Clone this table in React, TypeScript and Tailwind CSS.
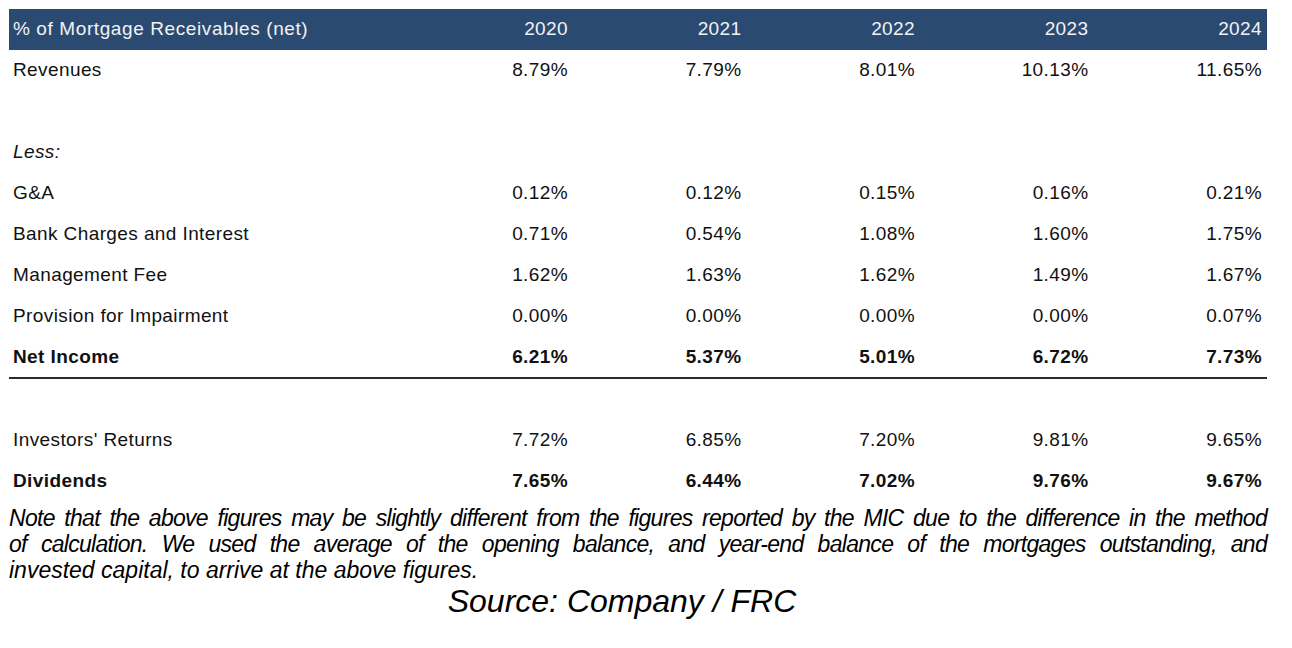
const years = ['2020', '2021', '2022', '2023', '2024']

type Row = {
  label: string
  values?: string[]
  bold?: boolean
  italic?: boolean
  rule?: boolean
}

const rows: Row[] = [
  { label: 'Revenues', values: ['8.79%', '7.79%', '8.01%', '10.13%', '11.65%'] },
  { label: '' },
  { label: 'Less:', italic: true },
  { label: 'G&A', values: ['0.12%', '0.12%', '0.15%', '0.16%', '0.21%'] },
  { label: 'Bank Charges and Interest', values: ['0.71%', '0.54%', '1.08%', '1.60%', '1.75%'] },
  { label: 'Management Fee', values: ['1.62%', '1.63%', '1.62%', '1.49%', '1.67%'] },
  { label: 'Provision for Impairment', values: ['0.00%', '0.00%', '0.00%', '0.00%', '0.07%'] },
  { label: 'Net Income', values: ['6.21%', '5.37%', '5.01%', '6.72%', '7.73%'], bold: true, rule: true },
  { label: '' },
  { label: "Investors' Returns", values: ['7.72%', '6.85%', '7.20%', '9.81%', '9.65%'] },
  { label: 'Dividends', values: ['7.65%', '6.44%', '7.02%', '9.76%', '9.67%'], bold: true },
]

export default function App() {
  return (
    <div className="min-h-[648px] w-[1292px] bg-white font-['Liberation_Sans',Arial,sans-serif] text-[#111]">
      <div className="px-[9px] pt-[9px]">
        <div className="w-[1258px] text-[19px] tracking-[0.4px]">
          <div className="grid h-[41px] grid-cols-[1fr_repeat(5,173.5px)] items-center bg-[#2b4a72] text-[#f2f2f2]">
            <div className="pl-[4px] tracking-[0.6px]">% of Mortgage Receivables (net)</div>
            {years.map((year) => (
              <div key={year} className="pr-[5px] text-right">
                {year}
              </div>
            ))}
          </div>

          {rows.map((row, i) => (
            <div
              key={i}
              className={`grid grid-cols-[1fr_repeat(5,173.5px)] items-center ${
                row.rule ? 'h-[42px] border-b-2 border-[#2a2a2a]' : 'h-[41px]'
              } ${row.bold ? 'font-bold' : ''}`}
            >
              <div className={`pl-[4px] ${row.italic ? 'italic' : ''}`}>{row.label}</div>
              {row.values?.map((value, j) => (
                <div key={j} className="pr-[5px] text-right">
                  {value}
                </div>
              ))}
            </div>
          ))}
        </div>

        <div className="mt-[3px] w-[1258px] text-[23px] leading-[26px] italic text-black">
          <p className="whitespace-nowrap text-justify tracking-[-0.7px] [text-align-last:justify]">
            Note that the above figures may be slightly different from the figures reported by the MIC due to the
            difference in the method
          </p>
          <p className="whitespace-nowrap text-justify tracking-[-0.7px] [text-align-last:justify]">
            of calculation. We used the average of the opening balance, and year-end balance of the mortgages
            outstanding, and
          </p>
          <p>invested capital, to arrive at the above figures.</p>
        </div>

        <p className="w-[1258px] pr-[32px] text-center text-[32px] leading-[36px] italic text-black">
          Source: Company / FRC
        </p>
      </div>
    </div>
  )
}
